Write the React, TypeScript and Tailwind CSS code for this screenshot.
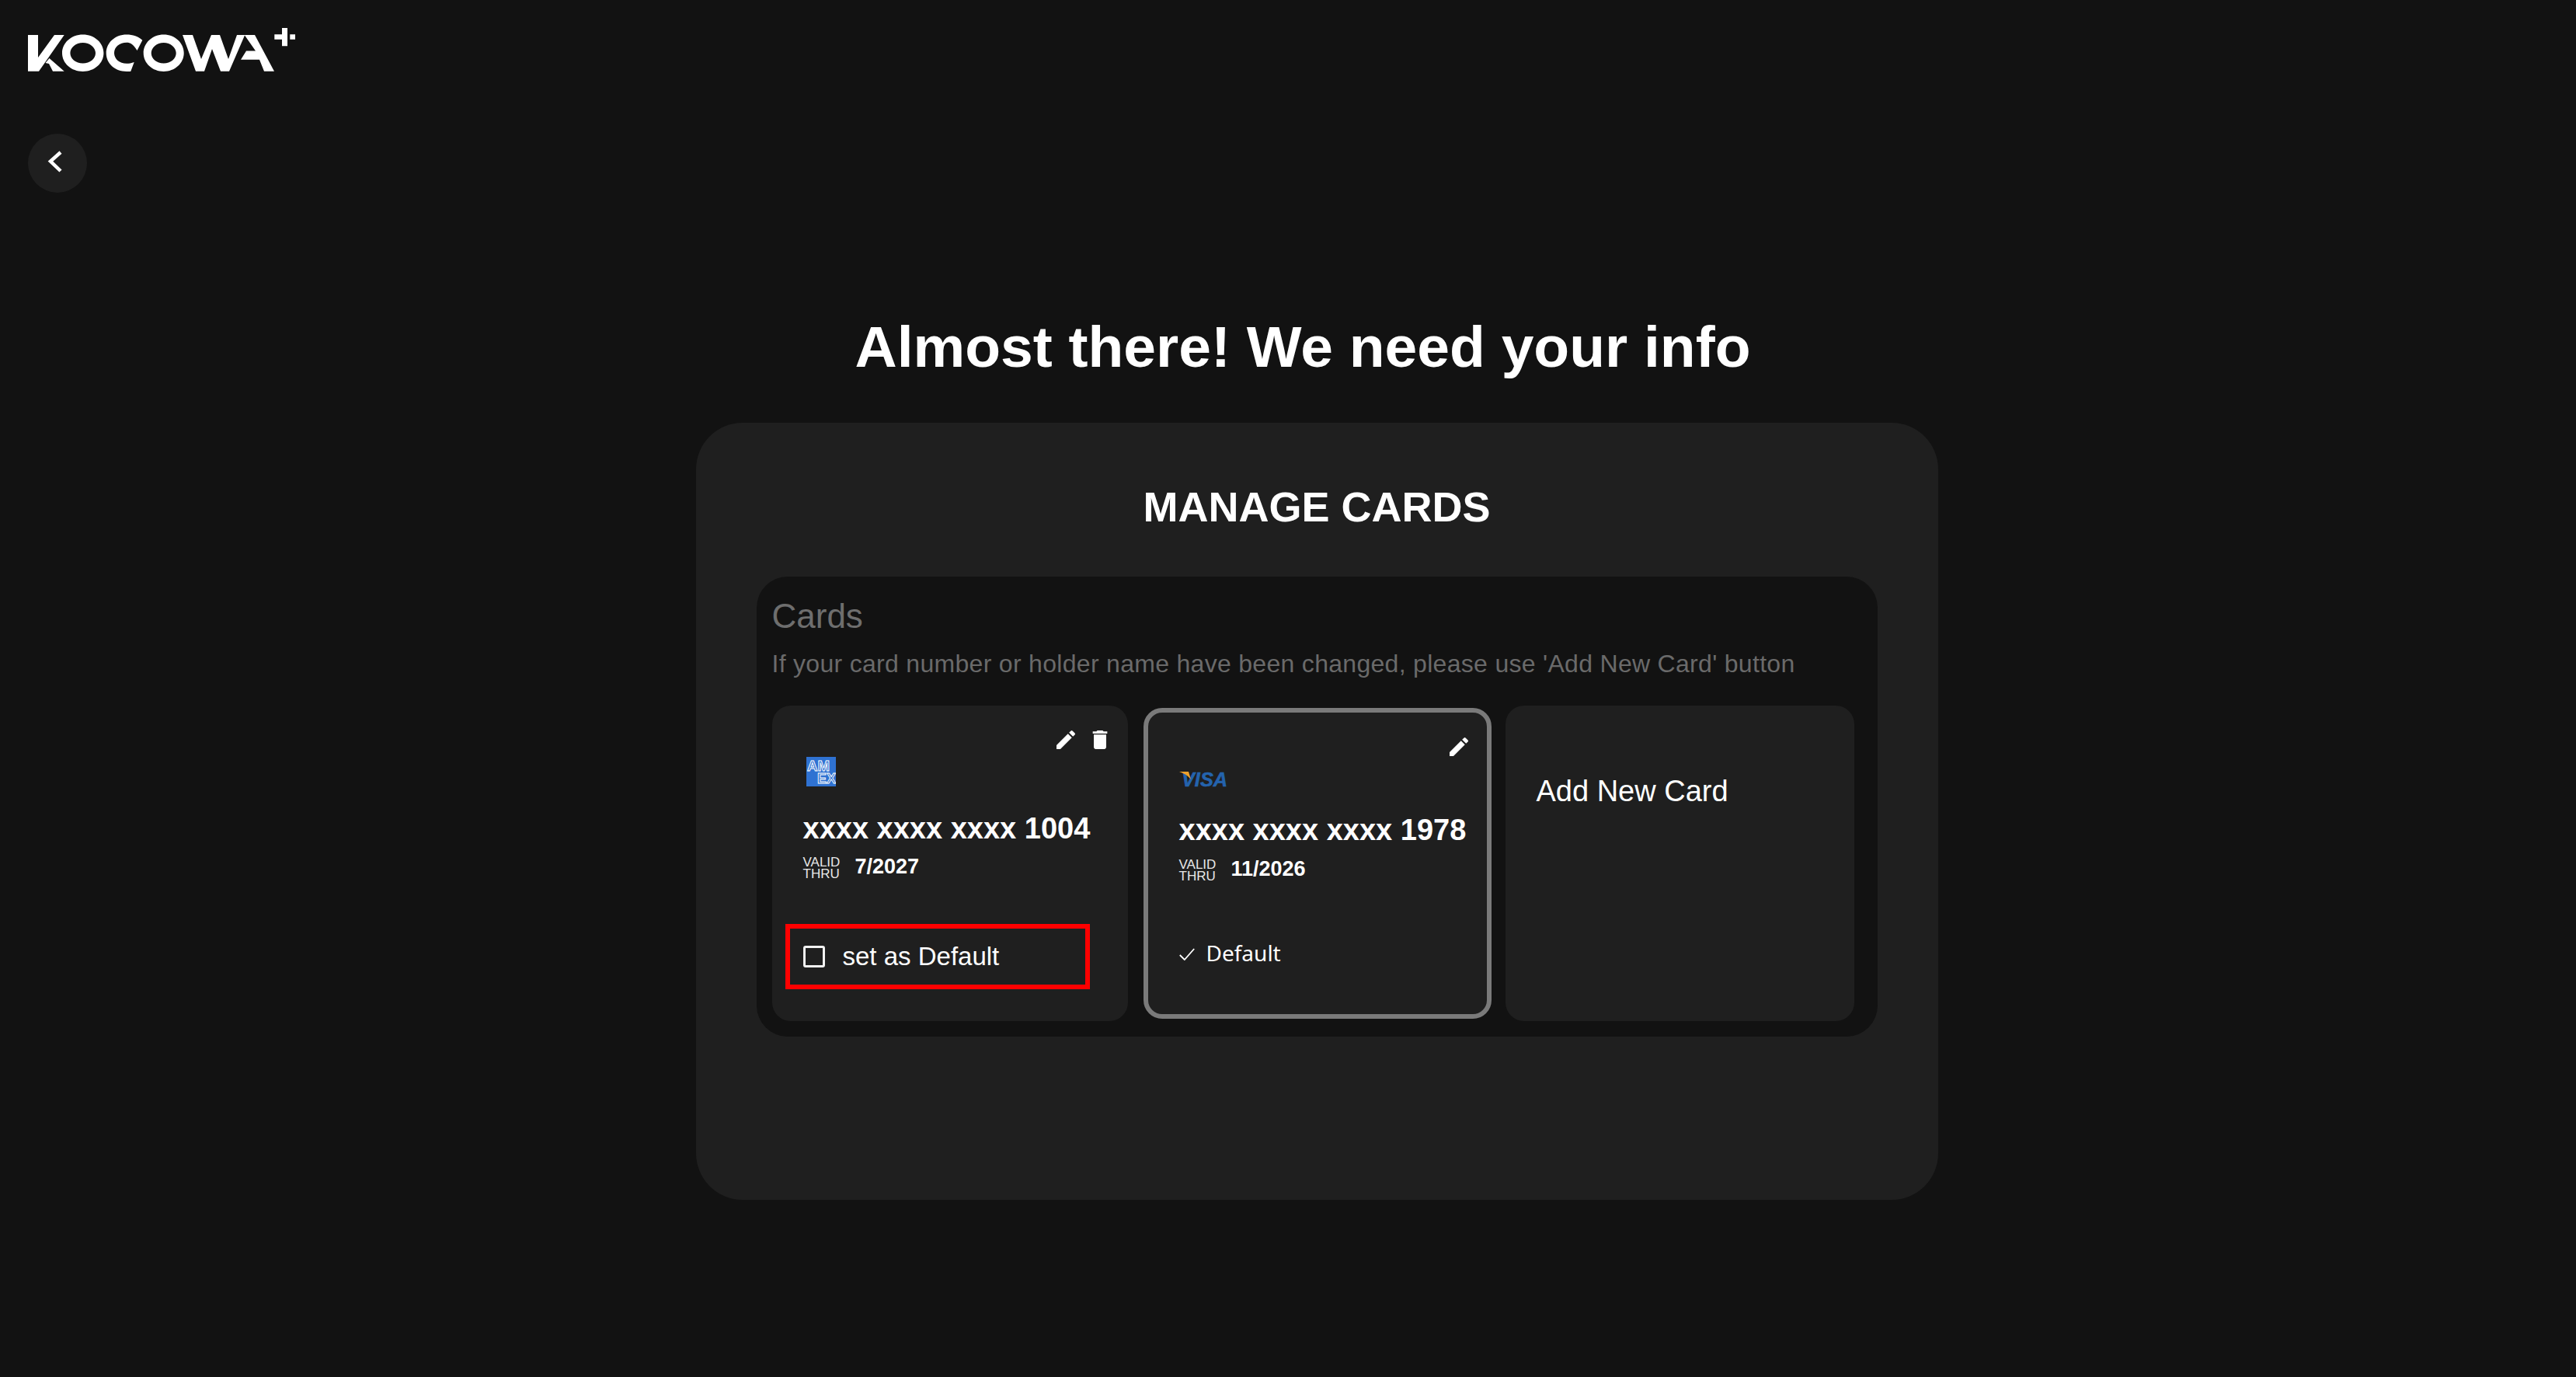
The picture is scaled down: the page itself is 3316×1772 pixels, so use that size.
function Logo() {
  return (
    <svg width="344" height="56" viewBox="0 0 344 56" fill="#fff" className="block">
      <path d="M0 9H13V38L34 9H46.7L14 55.7H0ZM27.5 39L46.7 55.7H32L27 46L22.5 45Z" />
      <path
        fillRule="evenodd"
        d="M70.7 8.5C85.5 8.5 97.4 19 97.4 32.3S85.5 56 70.7 56 44 45.6 44 32.3 55.9 8.5 70.7 8.5ZM70.7 19C61.7 19 54.4 25 54.4 32.3S61.7 45.6 70.7 45.6 87 39.6 87 32.3 79.7 19 70.7 19Z"
      />
      <path d="M147.3 15.7C142 11 135 8.5 127 8.5C112 8.5 100.7 19 100.7 32.3C100.7 46 112 56 127 56C129 56 131 56 132.3 55.7L136.7 44C133 45.4 130 45.8 127 45.8C118 45.8 111 40 111 32.3C111 24.5 118 18.8 127 18.8C132 18.8 135 20.5 140.5 29Z" />
      <path
        fillRule="evenodd"
        d="M174.7 8.5C189 8.5 200.7 19 200.7 32.3S189 56 174.7 56 148.7 45.6 148.7 32.3 160.4 8.5 174.7 8.5ZM174.7 19C165.9 19 158.7 25 158.7 32.3S165.9 45.6 174.7 45.6 190.7 39.6 190.7 32.3 183.5 19 174.7 19Z"
      />
      <path d="M199 9H212L223 40L236 9H247L258 40L269 9H292L317 55.7H304L298 40.7H274L281 29.5H293L279 9.5L259 55.7H248L237 27L227 55.7H216Z" />
      <path d="M317.3 8.3H327V0H334V23.3H327V14.7H317.3ZM337.3 8.3H344V14.7H337.3Z" />
    </svg>
  );
}

function Pencil() {
  return (
    <svg width="32" height="32" viewBox="0 0 24 24" fill="#fff">
      <path d="M3 17.25V21h3.75L17.81 9.94l-3.75-3.75L3 17.25zM20.71 7.04c.39-.39.39-1.02 0-1.41l-2.34-2.34a.9959.9959 0 0 0-1.41 0l-1.83 1.83 3.75 3.75 1.83-1.83z" />
    </svg>
  );
}

function Trash() {
  return (
    <svg width="32" height="32" viewBox="0 0 24 24" fill="#fff">
      <path d="M6 19c0 1.1.9 2 2 2h8c1.1 0 2-.9 2-2V7H6v12zM19 4h-3.5l-1-1h-5l-1 1H5v2h14V4z" />
    </svg>
  );
}

function Amex() {
  return (
    <svg width="38" height="38" viewBox="0 0 38 38" className="block">
      <rect width="38" height="38" fill="#2f72d2" />
      <text x="1" y="17.5" fontSize="18" fontWeight="700" fontFamily="Liberation Sans" fill="#2f72d2" stroke="#fff" strokeWidth="0.9" textLength="29" lengthAdjust="spacingAndGlyphs">AM</text>
      <text x="14" y="34" fontSize="18" fontWeight="700" fontFamily="Liberation Sans" fill="#2f72d2" stroke="#fff" strokeWidth="0.9" textLength="24" lengthAdjust="spacingAndGlyphs">EX</text>
    </svg>
  );
}

function Visa() {
  return (
    <svg width="64" height="19" viewBox="0 0 64 19" className="block overflow-visible">
      <text x="3" y="18.5" fontSize="26" fontWeight="700" fontStyle="italic" fontFamily="Liberation Sans" fill="#2463ad" stroke="#2463ad" strokeWidth="0.6" textLength="59" lengthAdjust="spacingAndGlyphs">VISA</text>
      <path d="M0 0H12L15 10C11 5 6 2 0 0Z" fill="#eda02c" />
    </svg>
  );
}

function Valid({ date }: { date: string }) {
  return (
    <div className="flex items-start gap-[19px]">
      <div className="text-[17px] leading-[15px] text-[#e8e8e8] pt-[2px]">
        <div>VALID</div>
        <div>THRU</div>
      </div>
      <span className="text-[27px] leading-[30px] font-bold text-white">{date}</span>
    </div>
  );
}

export default function App() {
  return (
    <div className="min-h-screen bg-[#121212] font-['Liberation_Sans',sans-serif] pt-9 pb-[228px]">
      <div className="pl-9">
        <Logo />
        <button className="mt-20 w-[76px] h-[76px] rounded-full bg-[#1f1f1f] flex items-center justify-center">
          <svg width="20" height="30" viewBox="0 0 20 30" fill="none" stroke="#fff" strokeWidth="4.5" className="-ml-[7px] -mt-[4px]">
            <path d="M17 3L4 14.5L17 27" />
          </svg>
        </button>
      </div>

      <h1 className="mt-[154px] pl-[38px] text-center text-[75px] leading-[88px] font-bold text-white">
        Almost there! We need your info
      </h1>

      <div className="flex justify-center pl-[74px] mt-[54px]">
        <div className="w-[1599px] h-[1000px] rounded-[60px] bg-[#1f1f1f] px-[78px] pt-[78px]">
          <h2 className="text-center text-[54px] leading-[60px] font-bold text-white">MANAGE CARDS</h2>

          <div className="mt-[60px] rounded-[40px] bg-[#121212] pl-[20px] pr-[30px] pt-[26px] pb-[20px]">
            <div className="text-[44px] leading-[50px] text-[#6e6e6e]">Cards</div>
            <p className="mt-[16px] text-[32px] leading-[40px] tracking-[0.3px] text-[#6a6a6a]">
              If your card number or holder name have been changed, please use 'Add New Card' button
            </p>

            <div className="mt-[34px] flex items-stretch">
              {/* amex, not default */}
              <div className="w-[458px] h-[406px] rounded-[24px] bg-[#1f1f1f] pt-[28px]">
                <div className="flex justify-end gap-[12px] pr-[20px]">
                  <Pencil />
                  <Trash />
                </div>
                <div className="ml-[44px] mt-[6px]">
                  <Amex />
                </div>
                <div className="ml-[40px] mt-[32px] text-[38px] leading-[44px] font-bold text-white whitespace-nowrap">xxxx xxxx xxxx 1004</div>
                <div className="ml-[40px] mt-[12px]">
                  <Valid date="7/2027" />
                </div>
                <div className="ml-[17px] mt-[57px] w-[392px] h-[84px] border-[6px] border-[#ff0000] pl-[17px] flex items-center gap-[23px]">
                  <span className="w-[28px] h-[28px] rounded-[3px] border-[3px] border-[#f2f2f2]" />
                  <span className="text-[33px] leading-[40px] text-white">set as Default</span>
                </div>
              </div>

              {/* visa, current default */}
              <div className="ml-[20px] my-[3px] w-[448px] h-[400px] rounded-[24px] border-[6px] border-[#7a7a7a] bg-[#1f1f1f] pt-[28px]">
                <div className="flex justify-end pr-[20px]">
                  <Pencil />
                </div>
                <div className="ml-[40px] mt-[16px]">
                  <Visa />
                </div>
                <div className="ml-[40px] mt-[34px] text-[38px] leading-[44px] font-bold text-white whitespace-nowrap">xxxx xxxx xxxx 1978</div>
                <div className="ml-[40px] mt-[13px]">
                  <Valid date="11/2026" />
                </div>
                <div className="ml-[40px] mt-[71px] flex items-center gap-[15px]">
                  <svg width="20" height="16" viewBox="0 0 20 16" fill="none" stroke="#fff" strokeWidth="1.8" className="mt-[4px]">
                    <path d="M0.8 9L6.8 15L19.2 1" />
                  </svg>
                  <span className="font-['Noto_Sans',sans-serif] text-[28px] leading-[40px] text-white">Default</span>
                </div>
              </div>

              <div className="ml-[18px] w-[449px] h-[406px] rounded-[24px] bg-[#1f1f1f] pl-[40px] pt-[88px]">
                <span className="text-[38px] leading-[44px] text-white">Add New Card</span>
              </div>
            </div>
          </div>
        </div>
      </div>
    </div>
  );
}
